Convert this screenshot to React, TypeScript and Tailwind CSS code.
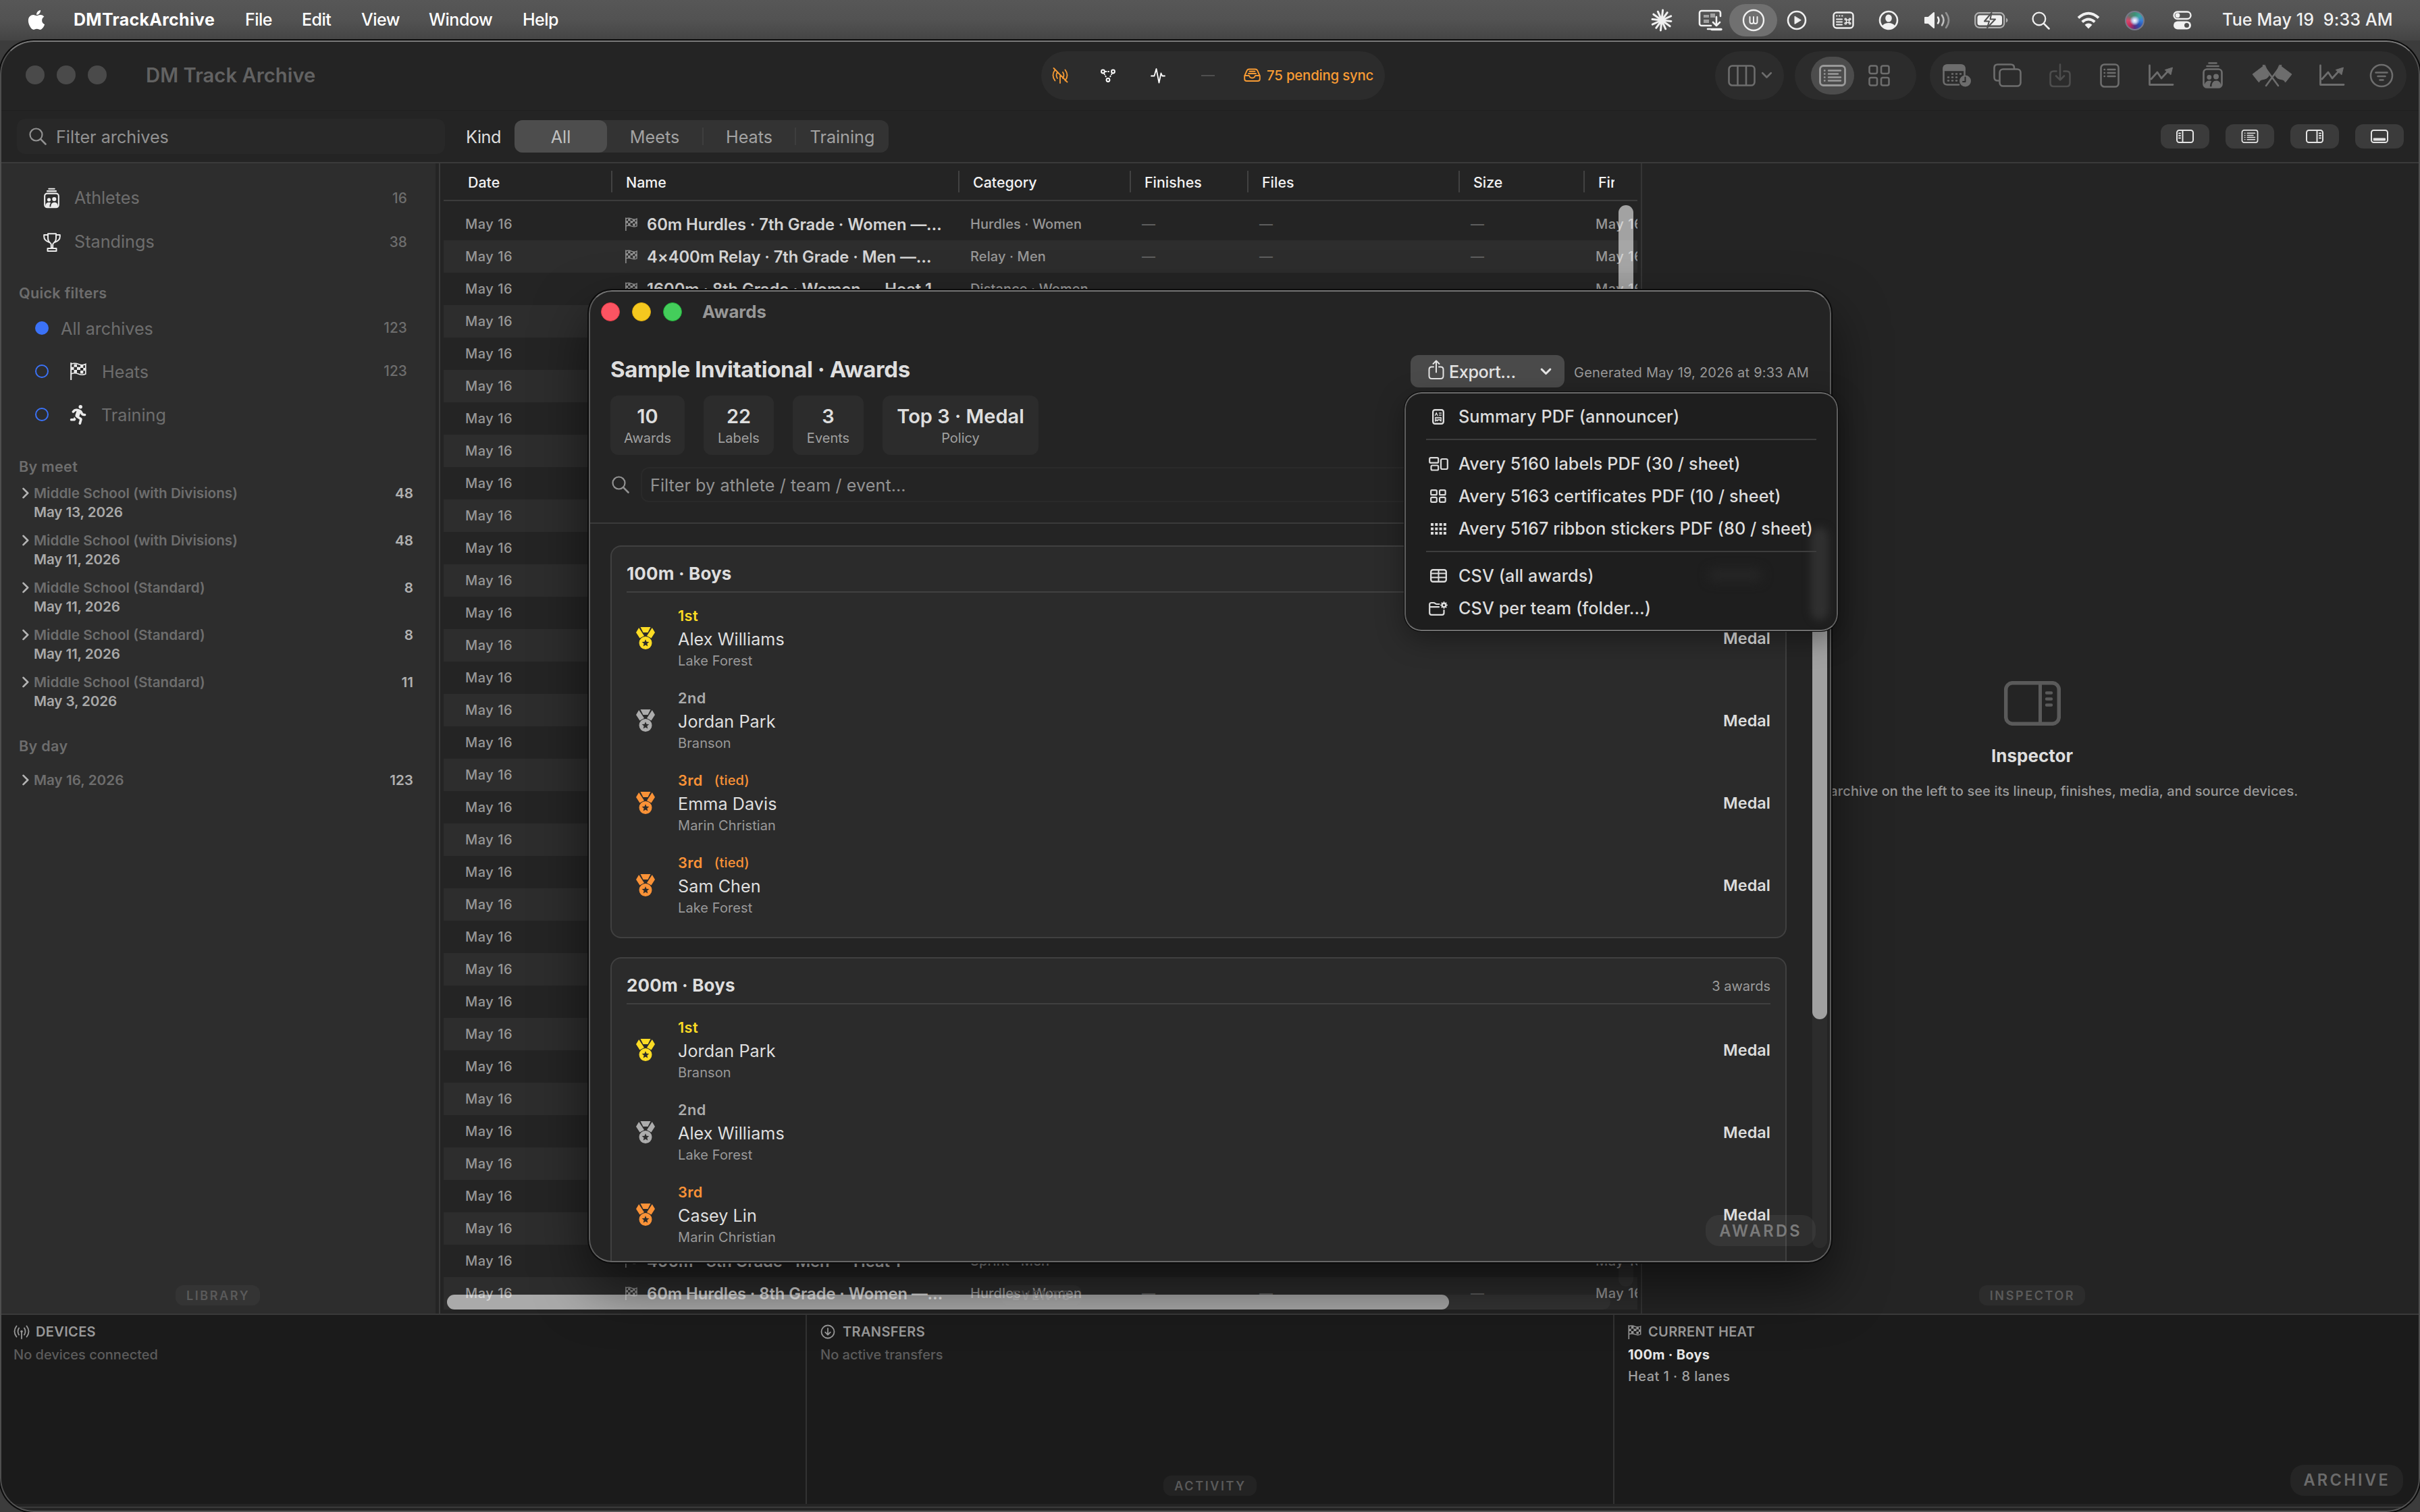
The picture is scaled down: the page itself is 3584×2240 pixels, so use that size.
import type { ReactNode } from "react";
import { FaApple, FaPersonRunning } from "react-icons/fa6";

/* ---------- icons ---------- */

type IconProps = { className?: string };

function Svg({ w, h, className = "", sw = 2, children }: { w: number; h: number; className?: string; sw?: number; children: ReactNode }) {
  return (
    <svg width={w} height={h} viewBox={`0 0 ${w} ${h}`} fill="none" stroke="currentColor" strokeWidth={sw} strokeLinecap="round" strokeLinejoin="round" className={`shrink-0 ${className}`}>
      {children}
    </svg>
  );
}

const Burst = () => (
  <Svg w={34} h={34} sw={3}>
    {[0, 30, 60, 90, 120, 150, 180, 210, 240, 270, 300, 330].map((a, i) => (
      <path key={a} d={i % 2 ? "M17 17V3" : "M17 17V2"} transform={`rotate(${a + 6} 17 17)`} />
    ))}
  </Svg>
);

const DisplayDown = () => (
  <Svg w={36} h={32} sw={2.6}>
    <path d="M19 24H5a3 3 0 0 1-3-3V5a3 3 0 0 1 3-3h25a3 3 0 0 1 3 3v5M14 29h5" />
    <path d="M8 8h8v4H8zM18 6h7v6h-7zM8 15h8v5H8z" fill="currentColor" stroke="none" opacity=".5" />
    <path d="M27 11v13m-5-5 5 5 5-5" />
    <path d="M20 29.5h14" strokeWidth="3.4" />
  </Svg>
);

const CircleW = () => (
  <Svg w={34} h={34} sw={2.4}>
    <circle cx="17" cy="17" r="15" />
    <path d="M11.500 12v7q0 3 2.800 3t2.700-3v-7m0 7q0 3 2.800 3t2.700-3v-7" strokeWidth="2" />
  </Svg>
);

const PlayCircle = () => (
  <Svg w={30} h={30} sw={2.6}>
    <circle cx="15" cy="15" r="13" />
    <path d="M12 9.5v11l9-5.500z" fill="currentColor" strokeWidth="1" />
  </Svg>
);

const CommandPanel = () => (
  <Svg w={32} h={26} sw={2.4}>
    <rect x="1.500" y="1.500" width="29" height="23" rx="4.500" />
    <path d="M6 6.500h.5M10 6.500h.5M14 6.500h.5M6 11.500h8M6 15.500h8M6 19.500h8" strokeWidth="2" />
    <path d="M20.500 12.500h4v4h-4zM20.500 12.500h-1.200a1.200 1.200 0 1 1 1.200-1.200zM24.500 12.500v-1.200a1.200 1.200 0 1 1 1.200 1.200zM20.500 16.500v1.200a1.200 1.200 0 1 1-1.200-1.200zM24.500 16.500h1.200a1.200 1.200 0 1 1-1.200 1.200z" strokeWidth="1.400" />
  </Svg>
);

const PersonCircle = () => (
  <Svg w={30} h={30} sw={2.6}>
    <circle cx="15" cy="15" r="13" />
    <ellipse cx="15" cy="12" rx="4.800" ry="5.600" fill="currentColor" stroke="none" />
    <path d="M5.500 23.500q3-4.500 9.500-4.500t9.500 4.500q-4 4.500-9.500 4.500t-9.500-4.500z" fill="currentColor" stroke="none" />
  </Svg>
);

const Speaker = () => (
  <Svg w={42} h={28} sw={2.6}>
    <path d="M2 10v8h5l8 7V3L7 10z" fill="currentColor" strokeWidth="2" />
    <path d="M21 9.500q3 4.500 0 9" />
    <path d="M27 6.500q5 7.500 0 15" opacity=".7" />
    <path d="M33 3q8 11 0 22" opacity=".4" />
  </Svg>
);

const Battery = () => (
  <Svg w={50} h={24} sw={2.2}>
    <rect x="1.200" y="1.200" width="43" height="21.600" rx="6" opacity=".6" />
    <rect x="4.500" y="4.500" width="36.500" height="15" rx="3.500" fill="currentColor" stroke="none" />
    <path d="M47 8.500q2.500 1 2.500 3.500T47 15.500z" fill="currentColor" stroke="none" opacity=".6" />
    <path d="M25.500 1 15 13.500h7L19 23l12-12.500h-7.500z" fill="currentColor" stroke="#505050" strokeWidth="2" />
  </Svg>
);

const Search = ({ className, size = 26 }: IconProps & { size?: number }) => (
  <svg width={size} height={size} viewBox="0 0 26 26" fill="none" stroke="currentColor" strokeWidth="2.200" strokeLinecap="round" className={`shrink-0 ${className ?? ""}`}>
    <circle cx="10.500" cy="10.500" r="9" />
    <path d="m17.200 17.200 7.300 7.300" strokeWidth="2.600" />
  </svg>
);

const Wifi = () => (
  <Svg w={36} h={26} sw={4}>
    <path d="M3 9.500q15-13.500 30 0M8.700 15.500q9.300-8 18.600 0" strokeLinecap="butt" />
    <path d="M18 25.500l5.500-5.800q-5.500-4.400-11 0z" fill="currentColor" stroke="none" />
  </Svg>
);

const Toggles = () => (
  <Svg w={28} h={28} sw={2.4}>
    <rect x="1.500" y="1.500" width="25" height="10.500" rx="5.200" />
    <circle cx="7" cy="6.700" r="3.400" fill="currentColor" stroke="none" />
    <rect x="1" y="15.500" width="26" height="12" rx="6" fill="currentColor" stroke="none" />
    <circle cx="20.500" cy="21.500" r="3.500" fill="#505050" stroke="none" />
  </Svg>
);

const AntennaSlash = () => (
  <Svg w={24} h={24} sw={1.800}>
    <path d="M4.500 3.500q-6 8 0 16M19.500 3.500q6 8 0 16M8 7q-3 4.500 0 9M16 7q3 4.500 0 9M12 12.500v10.500M2.500 1l20 20.500" />
  </Svg>
);

const Nodes = () => (
  <Svg w={22} h={20} sw={2}>
    <circle cx="3.500" cy="4" r="2.400" />
    <circle cx="18.500" cy="4" r="2.400" />
    <circle cx="11" cy="16.500" r="2.400" />
    <path d="M7.500 4h7M5.500 7.500l3.500 6M16.500 7.500l-3.500 6" strokeDasharray="1 2.600" strokeWidth="1.800" />
  </Svg>
);

const Pulse = () => (
  <Svg w={22} h={24} sw={1.800}>
    <path d="M1 12.500h4.500L8.500 2l4 20.500 3-14 1.800 4H21" />
  </Svg>
);

const Tray = () => (
  <Svg w={25} h={20} sw={1.900}>
    <path d="M1.200 11.500 4.500 4q1-2.500 3.500-2.500h9q2.500 0 3.500 2.500l3.300 7.500V16q0 3-3 3H4.200q-3 0-3-3zM1.200 11h6.300q.8 0 1 1 .8 2.500 4 2.500t4-2.500q.2-1 1-1h6.300M8.500 4.800h8M7 8h11" />
  </Svg>
);

const Columns = () => (
  <Svg w={42} h={32} sw={2.600}>
    <rect x="1.500" y="1.500" width="38" height="29" rx="5" />
    <path d="M14.500 2v28M27 2v28" />
  </Svg>
);

const ListRect = ({ w = 40, h = 32 }: { w?: number; h?: number }) => (
  <svg width={w} height={h} viewBox="0 0 40 32" fill="none" stroke="currentColor" strokeWidth="2.800" strokeLinecap="round">
    <rect x="1.500" y="1.500" width="37" height="29" rx="5" />
    <path d="M8 8.500h.5M8 13.500h.5M8 18.500h.5M8 23.500h.5M14 8.500h18M14 13.500h14M14 18.500h18M14 23.500h18" strokeWidth="2.400" />
  </svg>
);

const Grid4 = ({ w = 32, h = 32 }: { w?: number; h?: number }) => (
  <svg width={w} height={h} viewBox="0 0 32 32" preserveAspectRatio="none" fill="none" stroke="currentColor" strokeWidth="2.600">
    <rect x="1.500" y="1.500" width="11.500" height="11.500" rx="2.500" />
    <rect x="19" y="1.500" width="11.500" height="11.500" rx="2.500" />
    <rect x="1.500" y="19" width="11.500" height="11.500" rx="2.500" />
    <rect x="19" y="19" width="11.500" height="11.500" rx="2.500" />
  </svg>
);

const Grid4Small = () => (
  <Svg w={24} h={20} sw={2.200}>
    <rect x="1.200" y="1.200" width="8.600" height="7" rx="1.500" />
    <rect x="14" y="1.200" width="8.600" height="7" rx="1.500" />
    <rect x="1.200" y="11.800" width="8.600" height="7" rx="1.500" />
    <rect x="14" y="11.800" width="8.600" height="7" rx="1.500" />
  </Svg>
);

const CalendarClock = () => (
  <Svg w={43} h={34} sw={2.600}>
    <path d="M24 30.500H7q-5.500 0-5.500-5.500V7Q1.500 1.500 7 1.500h20q5.500 0 5.500 5.500v9" />
    <path d="M1.500 9V7Q1.500 1.500 7 1.500h20q5.500 0 5.500 5.500v2z" fill="currentColor" />
    <path d="M14 14.500h1M20 14.500h1M26 14.500h1M8 19.500h1M14 19.500h1M20 19.500h1M8 24.500h1M14 24.500h1M20 24.500h1" />
    <circle cx="33.500" cy="25" r="8.500" fill="currentColor" stroke="none" />
    <path d="M33.500 19.500V26H30" stroke="#2c2c2c" strokeWidth="2" />
  </Svg>
);

const CopyRects = () => (
  <Svg w={42} h={35} sw={2.600}>
    <path d="M8 25.500H6.500q-5 0-5-5v-14q0-5 5-5H26q5 0 5 5V8" />
    <rect x="9.500" y="8.500" width="31" height="25" rx="5" />
  </Svg>
);

const DownloadBox = () => (
  <Svg w={32} h={36} sw={2.600}>
    <path d="M10.500 11.500H6.500q-5 0-5 5V29q0 5 5 5h19q5 0 5-5V16.500q0-5-5-5h-4M16 1.500v23m-6-6 6 6 6-6" />
  </Svg>
);

const DocList = () => (
  <Svg w={29} h={36} sw={2.600}>
    <rect x="1.500" y="1.500" width="26" height="33" rx="5" />
    <path d="M6.500 9h.5M6.500 14h.5M6.500 19h.5M11.500 9h11M11.500 14h11M11.500 19h11" strokeWidth="2.400" />
  </Svg>
);

const ChartUp = () => (
  <Svg w={38} h={34} sw={2.800}>
    <path d="M1.500 2v28.500H36M4 22l9-10 6 9L31 8" />
    <path d="M24.500 8.500 35.500 5 33 15.500z" fill="currentColor" strokeWidth="1" />
  </Svg>
);

const PeopleStack = ({ w = 30, h = 39 }: { w?: number; h?: number }) => (
  <svg width={w} height={h} viewBox="0 0 30 39" fill="none" stroke="currentColor" strokeWidth="2.700" strokeLinecap="round">
    <path d="M9.500 1.500h11M6.500 6h17" />
    <rect x="1.500" y="10.500" width="27" height="27" rx="5" />
    <circle cx="9.800" cy="22.500" r="3.400" fill="currentColor" stroke="none" />
    <circle cx="20" cy="21.500" r="4" fill="currentColor" stroke="none" />
    <path d="M3 33q1.500-5.500 7-5.500 2 0 3.200 1-2.200 2.500-2.400 8.500H5q-2 0-2-2zM13.500 37q-.5-9.500 7-9.500 5 0 6.500 5.500v2q0 2-2 2z" fill="currentColor" stroke="none" />
  </svg>
);

const CrossedFlags = () => (
  <Svg w={60} h={34} sw={2.600}>
    <path d="M17 2 39 32M43 2 21 32" />
    <path d="M19 1.500 1 15l9.500 12q1-4 7-4.500 5-.5 8-5.500zM41 1.500 59 15l-9.500 12q-1-4-7-4.500-5-.5-8-5.500z" fill="currentColor" strokeWidth="1" />
  </Svg>
);

const FilterCircle = () => (
  <Svg w={36} h={36} sw={2.600}>
    <circle cx="18" cy="18" r="16" />
    <path d="M9.500 13.500h17M12.500 19h11M15.500 24.500h5" />
  </Svg>
);

const SidebarLeft = () => (
  <Svg w={26} h={20} sw={2}>
    <rect x="1" y="1" width="24" height="18" rx="3.500" />
    <path d="M9.500 1.500v17M4 5.500h2M4 9h2M4 12.500h2" />
  </Svg>
);

const SidebarRight = () => (
  <Svg w={26} h={20} sw={2}>
    <rect x="1" y="1" width="24" height="18" rx="3.500" />
    <path d="M16.500 1.500v17M20 5.500h2M20 9h2M20 12.500h2" />
  </Svg>
);

const BottomPanelIcon = () => (
  <Svg w={26} h={20} sw={2}>
    <rect x="1" y="1" width="24" height="18" rx="3.500" />
    <path d="M4.500 13h17v3h-17z" fill="currentColor" strokeWidth="1" />
  </Svg>
);

const InspectorBig = () => (
  <Svg w={84} h={66} sw={5.500}>
    <rect x="2.700" y="2.700" width="78.600" height="60.600" rx="10" />
    <path d="M53.500 4v58" strokeLinecap="butt" strokeWidth="5" />
    <path d="M63 17.500h7M63 26.500h7M63 35.500h7" strokeWidth="4.400" />
  </Svg>
);

const Trophy = () => (
  <Svg w={26} h={28} sw={2}>
    <path d="M7 1.200h12v6q0 5-3 7.300-1.800 1.300-1.800 3V22h-2.400v-4.500q0-1.700-1.800-3Q7 12.200 7 7.200z" />
    <path d="M7 3H1.200v2.500q0 6 8 8.500M19 3h5.800v2.500q0 6-8 8.500" />
    <path d="M6.500 23h13v4h-13z" />
  </Svg>
);

const CheckFlag = ({ w = 24, h = 26 }: { w?: number; h?: number }) => (
  <svg width={w} height={h} viewBox="0 0 24 26" fill="none" stroke="currentColor" strokeWidth="2" className="shrink-0">
    <path d="M1.200 1v24.500" strokeLinecap="round" />
    <path d="M1.200 2.500q5-2.500 11 0t10.600 0v14.500q-4.600 2.500-10.600 0t-11 0" strokeWidth="1.700" />
    <path d="M5.500 2.500h4.500v4.200H5.500zM15 4h4.300v4H15zM10 6.700h5v4.300h-5zM1.500 6.700h4v4.300h-4zM19.300 8H23v4.300h-3.700zM5.500 11H10v4.300H5.500zM15 12h4.300v4.500H15z" fill="currentColor" stroke="none" />
  </svg>
);

const Chevron = ({ className }: IconProps) => (
  <Svg w={10} h={17} sw={2.600} className={className}>
    <path d="m1.500 1.800 6.700 6.700-6.700 6.700" />
  </Svg>
);

const DownChevron = ({ w = 15, sw = 3 }: { w?: number; sw?: number }) => (
  <svg width={w} height={w * 0.62} viewBox="0 0 16 10" fill="none" stroke="currentColor" strokeWidth={sw} strokeLinecap="round" strokeLinejoin="round">
    <path d="m2 2 6 6 6-6" />
  </svg>
);

const MedalIcon = ({ className }: IconProps) => (
  <svg width="28" height="33" viewBox="0 0 28 33" fill="currentColor" className={`shrink-0 ${className ?? ""}`}>
    <path d="M6.500 0h15l-4 8h-7zM0 8l4.200-7L12 13l-6.500 3.500zM28 8l-4.200-7L16 13l6.500 3.500z" />
    <path fillRule="evenodd" d="M14 14a9.500 9.500 0 1 0 0 19 9.500 9.500 0 0 0 0-19zm0 4.200 1.500 3.600 3.900.3-3 2.500.9 3.800-3.300-2-3.300 2 .9-3.800-3-2.500 3.900-.3z" />
  </svg>
);

const Share = () => (
  <Svg w={24} h={30} sw={2}>
    <path d="M8 10.500H5.500q-4 0-4 4V24q0 4 4 4h13q4 0 4-4v-9.500q0-4-4-4H16M12 18.500V2M7.500 6 12 1.500 16.500 6" />
  </Svg>
);

const DocImage = () => (
  <Svg w={18} h={23} sw={2.400}>
    <rect x="1.200" y="1.200" width="15.600" height="20.600" rx="3" />
    <path d="M4.500 9.500 6.200 5.500l1.700 4M10.500 6h3M10.500 9h3" strokeWidth="1.400" />
    <path d="M4.800 12.500h8.400v5.500l-3-2.500-2.500 2-1-1-1.900 1.500z" strokeWidth="1.400" fill="currentColor" fillOpacity=".4" />
  </Svg>
);

const LabelsIcon = () => (
  <Svg w={29} h={21} sw={2.200}>
    <rect x="1.200" y="1.200" width="13" height="7.500" rx="1.800" />
    <rect x="3.500" y="12.500" width="10.700" height="7" rx="1.800" />
    <rect x="18" y="3" width="9.800" height="15" rx="2" />
  </Svg>
);

const Dots = () => (
  <Svg w={23} h={17}>
    <path d="M0 0h4v4H0zM6.300 0h4v4h-4zM12.600 0h4v4h-4zM18.900 0h4v4h-4zM0 6.500h4v4H0zM6.300 6.500h4v4h-4zM12.600 6.500h4v4h-4zM18.900 6.500h4v4h-4zM0 13h4v4H0zM6.300 13h4v4h-4zM12.600 13h4v4h-4zM18.900 13h4v4h-4z" fill="currentColor" stroke="none" />
  </Svg>
);

const TableIcon = () => (
  <Svg w={25} h={20} sw={2.400}>
    <rect x="1.200" y="1.200" width="22.600" height="17.600" rx="3" />
    <path d="M1.500 6.500h22M1.500 12.500h22M12.500 2v16.500" strokeWidth="2" />
  </Svg>
);

const FolderGear = () => (
  <Svg w={28} h={21} sw={2.200}>
    <path d="M22.500 13v4q0 2.800-2.800 2.800H4q-2.800 0-2.800-2.800V4.500Q1.200 2 4 2h3q1.500 0 2.500 1t2.500 1h3.500M1.500 8.200H15" />
    <circle cx="22.500" cy="5.500" r="2.800" strokeWidth="2.400" />
    <path d="M22.500 1v9M18 5.500h9M19.300 2.300l6.400 6.400M25.700 2.300l-6.400 6.400" strokeWidth="1.800" strokeDasharray="1.300 6.400" />
  </Svg>
);

const AntennaWaves = () => (
  <Svg w={24} h={22} sw={1.800}>
    <path d="M4.500 2.500q-6 8 0 16M19.500 2.500q6 8 0 16M8 5.500q-3 5 0 10M16 5.500q3 5 0 10M12 12v9" />
    <circle cx="12" cy="10.500" r="1.800" fill="currentColor" stroke="none" />
  </Svg>
);

const DownCircle = () => (
  <Svg w={22} h={22} sw={1.800}>
    <circle cx="11" cy="11" r="9.500" />
    <path d="M11 6v9.500m-3.800-3.800 3.800 3.800 3.800-3.800" />
  </Svg>
);

/* ---------- shared ---------- */

function Pill({ children, className = "" }: { children: ReactNode; className?: string }) {
  return (
    <div className={`flex h-[30px] items-center rounded-[12px] bg-white/[0.035] pt-px pr-[15px] pl-[16px] text-[18px] font-semibold tracking-[2.600px] text-[#5a5a5a] ${className}`}>
      {children}
    </div>
  );
}

/* ---------- menu bar ---------- */

function MenuBar() {
  return (
    <header className="flex h-[60px] shrink-0 items-center bg-linear-to-b from-[#575757] via-[#525252] to-[#444444] pr-[36px] pl-[39px] text-[25px] font-medium tracking-[-0.500px] text-white">
      <FaApple className="mb-[2px] h-[33px] w-[30px]" />
      <span className="ml-[40px] w-[254px] font-bold tracking-[0.300px]">DMTrackArchive</span>
      <span className="w-[84px]">File</span>
      <span className="w-[88px]">Edit</span>
      <span className="w-[100px]">View</span>
      <span className="w-[139px]">Window</span>
      <span>Help</span>
      <div className="ml-auto flex items-center text-[#f0f0f0]">
        <Burst />
        <div className="ml-[37px]"><DisplayDown /></div>
        <div className="ml-[10px] flex h-[48px] w-[71px] items-center justify-center rounded-full bg-[#707070]"><CircleW /></div>
        <div className="ml-[14px]"><PlayCircle /></div>
        <div className="ml-[38px]"><CommandPanel /></div>
        <div className="ml-[36px]"><PersonCircle /></div>
        <div className="ml-[37px]"><Speaker /></div>
        <div className="ml-[33px]"><Battery /></div>
        <div className="ml-[35px]"><Search size={27} /></div>
        <div className="ml-[39px]"><Wifi /></div>
        <div className="ml-[36px] size-[29px] rounded-full border-2 border-[#77798a] bg-[radial-gradient(circle_at_50%_50%,#ffffff_0%,#b9c8ea_20%,transparent_42%),conic-gradient(from_0deg,#3f8f74,#3fa6a0,#3a7fd8,#2a4fb0,#5a2f80,#c22a5a,#d8476a,#5c7a6c,#3f8f74)]" />
        <div className="ml-[42px]"><Toggles /></div>
        <span className="ml-[45px] w-[257px] whitespace-pre tracking-[0.150px]">Tue May 19  9:33 AM</span>
      </div>
    </header>
  );
}

/* ---------- title bar and filter row ---------- */

function TitleBar() {
  return (
    <div className="flex h-[104px] shrink-0 items-center border-b border-[#202020] text-[#6d6d6d]">
      <div className="flex w-[1542px] items-center pl-[38px]">
        <div className="flex gap-[18px]">
          <span className="size-[28px] rounded-full bg-[#4a4a4a]" />
          <span className="size-[28px] rounded-full bg-[#4a4a4a]" />
          <span className="size-[28px] rounded-full bg-[#4a4a4a]" />
        </div>
        <span className="ml-[58px] pt-px text-[29.200px] font-semibold tracking-[0.050px] text-[#626262]">DM Track Archive</span>
      </div>
      <div className="flex h-[72px] w-[509px] items-center rounded-full bg-[#2c2c2c] pl-[16px] text-white">
        <span className="text-[#f79b34]"><AntennaSlash /></span>
        <span className="ml-[48px]"><Nodes /></span>
        <span className="ml-[52px]"><Pulse /></span>
        <span className="ml-[53px] h-[2px] w-[20px] bg-[#4f4f4f]" />
        <span className="ml-[43px] flex items-center gap-[9px] text-[#f79b34]">
          <Tray />
          <span className="pt-px text-[20.400px] font-medium tracking-[-0.200px]">75 pending sync</span>
        </span>
      </div>
      <div className="mr-[20px] ml-auto flex items-center">
        <div className="flex h-[72px] w-[102px] items-center gap-[7px] rounded-full bg-[#2c2c2c] pl-[19px]">
          <Columns />
          <DownChevron w={17} sw={2.600} />
        </div>
        <div className="ml-[16px] flex h-[72px] w-[180px] items-center rounded-full bg-[#2c2c2c] pl-[24px]">
          <span className="flex h-[56px] w-[64px] items-center justify-center rounded-full bg-[#4c4c4c] text-[#9a9a9a]"><ListRect /></span>
          <span className="ml-[21px]"><Grid4 /></span>
        </div>
        <div className="ml-[20px] flex h-[72px] w-[706px] items-center rounded-full bg-[#2c2c2c] pl-[19px]">
          <CalendarClock />
          <span className="ml-[32px]"><CopyRects /></span>
          <span className="ml-[41px] text-[#4d4d4d]"><DownloadBox /></span>
          <span className="ml-[43px]"><DocList /></span>
          <span className="ml-[43px]"><ChartUp /></span>
          <span className="ml-[42px]"><PeopleStack /></span>
          <span className="ml-[43px]"><CrossedFlags /></span>
          <span className="ml-[40px]"><ChartUp /></span>
          <span className="ml-[36px]"><FilterCircle /></span>
        </div>
      </div>
    </div>
  );
}

const layoutIcons = [<SidebarLeft />, <ListRect w={26} h={20} />, <SidebarRight />, <BottomPanelIcon />];

function FilterRow() {
  return (
    <div className="flex h-[76px] shrink-0 items-center pr-[24px] pl-[25px] text-[25.200px]">
      <div className="flex h-[52px] w-[634px] items-center rounded-[12px] bg-[#282828] pl-[18px] text-[#919191]">
        <Search />
        <span className="ml-[14px] pt-[3px]">Filter archives</span>
      </div>
      <span className="ml-[31px] w-[72px] pt-[3px] tracking-[-0.400px] text-[#dedede]">Kind</span>
      <div className="flex h-[48px] w-[554px] items-center rounded-[12px] bg-[#333333] text-[#a2a2a2]">
        <span className="flex h-[48px] w-[137px] items-center justify-center rounded-[12px] bg-[#4d4d4d] pt-[3px] text-[#c0c0c0]">All</span>
        <span className="w-[141px] pt-[3px] text-center">Meets</span>
        <span className="h-[26px] w-[2px] bg-[#3e3e3e]" />
        <span className="w-[135px] pt-[3px] text-center">Heats</span>
        <span className="h-[26px] w-[2px] bg-[#3e3e3e]" />
        <span className="flex-1 pt-[3px] text-center">Training</span>
      </div>
      <div className="ml-auto flex gap-[24px] text-[#e4e4e4]">
        {layoutIcons.map((icon, i) => (
          <span key={i} className="flex h-[36px] w-[72px] items-center justify-center rounded-[12px] bg-[#3b3b3b]">{icon}</span>
        ))}
      </div>
    </div>
  );
}

/* ---------- sidebar ---------- */

const meets = [
  ["Middle School (with Divisions)", "May 13, 2026", "48"],
  ["Middle School (with Divisions)", "May 11, 2026", "48"],
  ["Middle School (Standard)", "May 11, 2026", "8"],
  ["Middle School (Standard)", "May 11, 2026", "8"],
  ["Middle School (Standard)", "May 3, 2026", "11"],
];

function Count({ children }: { children: ReactNode }) {
  return <span className="ml-auto text-[20.800px] font-medium tracking-[0.100px]">{children}</span>;
}

function Sidebar() {
  return (
    <aside className="relative flex w-[645px] shrink-0 flex-col bg-[#2d2d2d] text-[25.200px] text-[#6d6d6d]">
      <div className="mt-[19px] flex h-[65px] items-center pr-[42px] pl-[65px]">
        <span className="flex w-[45px] text-[#ebebeb]"><PeopleStack w={23} h={31} /></span>
        <span className="pt-px">Athletes</span>
        <Count>16</Count>
      </div>
      <div className="flex h-[65px] items-center pr-[42px] pl-[64px]">
        <span className="flex w-[46px] text-[#ebebeb]"><Trophy /></span>
        <span className="pt-px">Standings</span>
        <Count>38</Count>
      </div>
      <div className="mt-[23px] flex h-[40px] items-center pl-[28px] text-[21.600px] font-semibold tracking-[0.300px]">Quick filters</div>
      <div className="flex h-[64px] items-center pr-[42px] pl-[52px]">
        <span className="mr-[18px] size-[20px] rounded-full bg-[#3b72f7]" />
        <span className="pt-[3px]">All archives</span>
        <Count>123</Count>
      </div>
      <div className="flex h-[64px] items-center pr-[42px] pl-[52px]">
        <span className="mr-[32px] size-[20px] rounded-full border-2 border-[#3b72f7]" />
        <span className="flex w-[47px] text-[#ebebeb]"><CheckFlag /></span>
        <span className="pt-[3px]">Heats</span>
        <Count>123</Count>
      </div>
      <div className="flex h-[64px] items-center pr-[42px] pl-[52px]">
        <span className="mr-[30px] size-[20px] rounded-full border-2 border-[#3b72f7]" />
        <span className="flex w-[48px] text-[#ebebeb]"><FaPersonRunning className="size-[29px]" /></span>
        <span className="pt-[3px]">Training</span>
      </div>
      <div className="mt-[25px] flex h-[40px] items-center pl-[28px] text-[21.600px] font-semibold tracking-[0.300px]">By meet</div>
      <div className="mt-[6px] text-[20.700px] leading-[28px] font-semibold">
        {meets.map(([name, date, count], i) => (
          <div key={i} className="flex h-[70px] pr-[33px] pl-[33px]">
            <Chevron className="mt-[5px] mr-[7px] text-[#b4b4b4]" />
            <div>
              <div>{name}</div>
              <div className="tracking-[-0.150px] text-[#a9a9a9]">{date}</div>
            </div>
            <span className="ml-auto text-[#b0b0b0]">{count}</span>
          </div>
        ))}
      </div>
      <div className="mt-[18px] flex h-[40px] items-center pl-[28px] text-[21.600px] font-semibold tracking-[0.300px]">By day</div>
      <div className="mt-[17px] flex h-[28px] pr-[33px] pl-[33px] text-[20.700px] leading-[28px] font-semibold">
        <Chevron className="mt-[5px] mr-[7px] text-[#b4b4b4]" />
        May 16, 2026
        <span className="ml-auto text-[#b0b0b0]">123</span>
      </div>
      <div className="absolute inset-x-0 bottom-[12px] flex justify-center"><Pill>LIBRARY</Pill></div>
    </aside>
  );
}

/* ---------- archive table ---------- */

const headers = ["Date", "Name", "Category", "Finishes", "Files", "Size", "Fir"];
const events = [
  ["60m Hurdles · 7th Grade · Women —…", "Hurdles · Women"],
  ["4×400m Relay · 7th Grade · Men —…", "Relay · Men"],
  ["1600m · 8th Grade · Women — Heat 1", "Distance · Women"],
  ["400m · 8th Grade · Men — Heat 1", "Sprint · Men"],
];
const tableRows = Array.from({ length: 34 }, (_, i) => {
  if (i < 3) return events[i];
  if (i === 33) return ["60m Hurdles · 8th Grade · Women —…", "Hurdles · Women"];
  return events[3];
});

function ArchiveTable() {
  return (
    <section className="relative w-[1768px] shrink-0 overflow-hidden">
      <div className="w-[1734px] overflow-hidden">
        <div className="grid h-[54px] w-[1768px] grid-cols-[250px_514px_254px_174px_313px_185px_78px] items-center text-[21.400px] font-medium text-[#f2f2f2]">
          {headers.map((h, i) => (
            <div key={h} className={`flex h-[32px] items-center border-[#424242] pt-[2px] ${i === 0 ? "pl-[36px]" : "pl-[20px]"} ${i < 6 ? "border-r-2" : ""}`}>{h}</div>
          ))}
        </div>
      </div>
      <div className="mb-[10px] h-[2px] bg-[#3c3c3c]" />
      {tableRows.map(([name, cat], i) => (
        <div key={i} className={`grid h-[48px] grid-cols-[250px_514px_254px_174px_313px_185px_140px] items-center text-[20px] font-medium whitespace-nowrap text-[#979797] ${i % 2 ? "bg-[#2d2d2d]" : ""}`}>
          <div className="pl-[32px] tracking-[0.500px]">May 16</div>
          <div className="flex items-center pl-[19px]">
            <CheckFlag w={18} h={20} />
            <span className="ml-[14px] pt-px text-[23.800px] font-semibold tracking-[-0.080px] text-[#d4d4d4]">{name}</span>
          </div>
          <div className="pl-[16px] tracking-[0.100px]">{cat}</div>
          <div className="pl-[16px] text-[#5e5e5e]">—</div>
          <div className="pl-[16px] text-[#5e5e5e]">—</div>
          <div className="pl-[16px] text-[#5e5e5e]">—</div>
          <div className="pl-[16px] tracking-[0.500px]">May 16</div>
        </div>
      ))}
      <div className="absolute bottom-[12px] left-[826px]"><Pill>EVENTS</Pill></div>
      <div className="absolute top-[62px] right-[6px] h-[1602px] w-[22px] rounded-full bg-white/[0.04]">
        <div className="h-[900px] rounded-full bg-white/[0.56]" />
      </div>
      <div className="absolute bottom-[6px] left-[5px] h-[22px] w-[1723px] rounded-full bg-white/[0.04]">
        <div className="h-full w-[1484px] rounded-full bg-white/[0.58]" />
      </div>
    </section>
  );
}

/* ---------- inspector and activity ---------- */

function Inspector() {
  return (
    <section className="relative flex flex-1 flex-col items-center overflow-hidden pl-[3px]">
      <div className="mt-[767px] text-[#5a5a5a]"><InspectorBig /></div>
      <div className="mt-[28px] h-[34px] text-[26px] leading-[34px] font-bold text-[#dedede]">Inspector</div>
      <div className="mt-[19px] text-[20px] leading-[32px] font-medium tracking-[0.100px] whitespace-nowrap text-[#9a9a9a]">
        Select an archive on the left to see its lineup, finishes, media, and source devices.
      </div>
      <div className="absolute inset-x-0 bottom-[12px] flex justify-center pl-[3px]"><Pill>INSPECTOR</Pill></div>
    </section>
  );
}

function Heading({ icon, children }: { icon: ReactNode; children: ReactNode }) {
  return (
    <div className="flex h-[34px] items-center gap-[8px] pt-[2px] font-semibold tracking-[0.350px] text-[#999999]">
      <span className="flex w-[25px] items-center">{icon}</span>
      {children}
    </div>
  );
}

function BottomPanel() {
  return (
    <div className="relative flex h-[280px] shrink-0 bg-[#1b1b1b] text-[20px] font-medium">
      <div className="w-[1195px] border-r-2 border-[#333333] pt-[7px] pl-[20px]">
        <Heading icon={<AntennaWaves />}>DEVICES</Heading>
        <div className="leading-[36px] text-[#5c5c5c]">No devices connected</div>
      </div>
      <div className="w-[1196px] border-r-2 border-[#333333] pt-[7px] pl-[20px]">
        <Heading icon={<DownCircle />}>TRANSFERS</Heading>
        <div className="leading-[36px] text-[#5c5c5c]">No active transfers</div>
      </div>
      <div className="flex-1 pt-[7px] pl-[20px]">
        <div className="flex h-[34px] items-center gap-[10px] pt-[2px] font-semibold tracking-[0.350px] text-[#999999]">
          <CheckFlag w={20} h={21} />
          CURRENT HEAT
        </div>
        <div className="leading-[36px] font-bold tracking-[0.250px] text-[#e6e6e6]">100m · Boys</div>
        <div className="leading-[28px] tracking-[0.450px] text-[#a0a0a0]">Heat 1 · 8 lanes</div>
      </div>
      <div className="absolute inset-x-0 bottom-[12px] flex justify-center"><Pill>ACTIVITY</Pill></div>
      <div className="absolute right-[25px] bottom-[12px] flex h-[46px] items-center rounded-[20px] bg-[#252525] px-[19px] text-[23.600px] font-semibold tracking-[3.300px] text-[#6b6b6b]">
        ARCHIVE
      </div>
    </div>
  );
}

/* ---------- awards window ---------- */

const stats = [
  { value: "10", label: "Awards", box: "w-[110px]" },
  { value: "22", label: "Labels", box: "w-[104px] ml-[28px]" },
  { value: "3", label: "Events", box: "w-[105px] ml-[28px]" },
  { value: "Top 3 · Medal", label: "Policy", box: "w-[231px] ml-[28px]" },
];

type Award = { place: string; tied?: boolean; name: string; school: string; color: string };

const gold = "text-[#fcdc24]";
const silver = "text-[#acacac]";
const bronze = "text-[#fa9237]";

const cards: { title: string; count: string; awards: Award[] }[] = [
  {
    title: "100m · Boys",
    count: "4 awards",
    awards: [
      { place: "1st", name: "Alex Williams", school: "Lake Forest", color: gold },
      { place: "2nd", name: "Jordan Park", school: "Branson", color: silver },
      { place: "3rd", tied: true, name: "Emma Davis", school: "Marin Christian", color: bronze },
      { place: "3rd", tied: true, name: "Sam Chen", school: "Lake Forest", color: bronze },
    ],
  },
  {
    title: "200m · Boys",
    count: "3 awards",
    awards: [
      { place: "1st", name: "Jordan Park", school: "Branson", color: gold },
      { place: "2nd", name: "Alex Williams", school: "Lake Forest", color: silver },
      { place: "3rd", name: "Casey Lin", school: "Marin Christian", color: bronze },
    ],
  },
];

function AwardRow({ a }: { a: Award }) {
  return (
    <div className="flex h-[122px] items-center pl-[14px]">
      <MedalIcon className={`mt-[3px] ${a.color}`} />
      <div className="ml-[34px]">
        <div className={`flex h-[36px] items-center text-[21.800px] font-semibold tracking-[0.400px] ${a.color}`}>
          {a.place}
          {a.tied && <span className="ml-[17px] text-[20px] font-medium tracking-[0.200px]">(tied)</span>}
        </div>
        <div className="h-[34px] text-[25.200px] leading-[34px] tracking-[0.050px] text-[#dfdfdf]">{a.name}</div>
        <div className="h-[30px] text-[20px] leading-[30px] tracking-[0.100px] text-[#999999]">{a.school}</div>
      </div>
      <span className="mt-[4px] ml-auto text-[23.500px] font-semibold text-[#dcdcdc]">Medal</span>
    </div>
  );
}

function AwardsWindow() {
  return (
    <div className="absolute top-[430px] left-[872px] flex h-[1440px] w-[1840px] flex-col overflow-hidden rounded-[34px] bg-[#242424]">
      <div className="flex h-[64px] shrink-0 items-center pl-[18px]">
        <span className="size-[28px] rounded-full border border-[#e03945] bg-[#fc5462]" />
        <span className="ml-[18px] size-[28px] rounded-full border border-[#dba90f] bg-[#f5c81f]" />
        <span className="ml-[18px] size-[28px] rounded-full border border-[#1fac38] bg-[#44cd5b]" />
        <span className="ml-[30px] pt-px text-[25.800px] font-bold text-[#979797]">Awards</span>
      </div>
      <div className="mt-[26px] flex h-[60px] shrink-0 items-center px-[32px]">
        <span className="pb-[5px] text-[33px] font-bold tracking-[-0.420px] text-[#dedede]">Sample Invitational · Awards</span>
        <div className="ml-auto flex h-[48px] w-[228px] items-center rounded-[12px] bg-[#4a4a4a] pl-[26px] text-[#e4e4e4]">
          <span className="-mt-[4px]"><Share /></span>
          <span className="ml-[7px] pt-[3px] text-[25.200px] font-medium tracking-[-0.400px]">Export…</span>
          <span className="mr-[19px] ml-auto"><DownChevron w={17} sw={2.800} /></span>
        </div>
        <span className="ml-[14px] w-[349px] pt-[3px] text-right text-[20px] tracking-[0.220px] whitespace-nowrap text-[#999999]">
          <span className="-mr-[1px] pr-[2px]">Generated May 19, 2026 at 9:33 AM</span>
        </span>
      </div>
      <div className="mt-[6px] flex h-[88px] shrink-0 px-[32px]">
        {stats.map((s) => (
          <div key={s.label} className={`flex h-[88px] flex-col items-center rounded-[12px] bg-[#2c2c2c] pt-[14px] ${s.box}`}>
            <span className="h-[34px] text-[29px] leading-[34px] font-semibold whitespace-nowrap text-[#dedede]">{s.value}</span>
            <span className="h-[30px] text-[20px] leading-[30px] text-[#a0a0a0]">{s.label}</span>
          </div>
        ))}
      </div>
      <div className="mt-[18px] flex h-[52px] shrink-0 items-center px-[32px] text-[25.200px] tracking-[0.060px] text-[#929292]">
        <Search className="ml-[2px]" />
        <div className="ml-[17px] flex h-[52px] flex-1 items-center rounded-[12px] border-2 border-[#2a2a2a] pt-[3px] pl-[12px]">Filter by athlete / team / event…</div>
      </div>
      <div className="mt-[30px] h-[2px] shrink-0 bg-[#3a3a3a]" />
      <div className="flex min-h-0 flex-1 flex-col gap-[28px] pt-[32px] pl-[32px]">
        {cards.map((c, i) => (
          <div key={c.title} className={`w-[1742px] shrink-0 rounded-[16px] border-2 border-[#404040] bg-[#2b2b2b] px-[22px] pb-[17px] ${i === 1 ? "h-[520px]" : ""}`}>
            <div className="flex h-[68px] items-center justify-between border-b-2 border-[#404040] pt-[12px]">
              <span className="text-[26px] font-bold tracking-[0.150px] text-[#dedede]">{c.title}</span>
              <span className="pt-[3px] text-[20px] text-[#9b9b9b]">{c.count}</span>
            </div>
            <div className="pt-[5px]">
              {c.awards.map((a, j) => (
                <AwardRow key={j} a={a} />
              ))}
            </div>
          </div>
        ))}
      </div>
      <div className="absolute top-[346px] left-[1812px] h-[1073px] w-[22px] rounded-full bg-[#2c2c2c]">
        <div className="h-[734px] rounded-full bg-[#a1a1a1]" />
      </div>
      <div className="absolute right-[23px] bottom-[24px] flex h-[46px] items-center rounded-[20px] bg-white/[0.05] pt-px pr-[20px] pl-[20px] text-[23.600px] font-semibold tracking-[3.300px] text-[#7a7a7a]">
        AWARDS
      </div>
      <div className="absolute inset-0 rounded-[34px] border-2 border-x-[#5a5a5a] border-t-[#747474] border-b-[#666666]" />
    </div>
  );
}

/* ---------- export menu ---------- */

function MenuItem({ icon, children }: { icon: ReactNode; children: ReactNode }) {
  return (
    <div className="flex h-[48px] items-center pl-[30px]">
      <span className="mr-[10px] flex w-[40px] justify-center">{icon}</span>
      <span className="pt-[2px]">{children}</span>
    </div>
  );
}

function ExportMenu() {
  return (
    <div className="absolute top-[581px] left-[2080px] h-[354px] w-[642px] overflow-hidden rounded-[25px] bg-[#1e1e1e] pt-[12px] text-[25.200px] font-medium tracking-[0.080px] whitespace-nowrap text-[#dcdcdc] shadow-[0_0_0_1px_#0a0a0a,0_12px_40px_rgba(0,0,0,0.350)]">
      <div className="absolute top-[200px] left-[602px] h-[138px] w-[26px] rounded-full bg-[#303030] blur-[6px]" />
      <div className="absolute top-[262px] left-[450px] h-[18px] w-[80px] rounded-full bg-[#262626] blur-[8px]" />
      <div className="relative">
        <MenuItem icon={<DocImage />}>Summary PDF (announcer)</MenuItem>
        <div className="mt-[9px] mb-[11px] ml-[32px] h-[2px] w-[578px] bg-[#3d3d3d]" />
        <MenuItem icon={<LabelsIcon />}>Avery 5160 labels PDF (30 / sheet)</MenuItem>
        <MenuItem icon={<Grid4Small />}>Avery 5163 certificates PDF (10 / sheet)</MenuItem>
        <MenuItem icon={<Dots />}>Avery 5167 ribbon stickers PDF (80 / sheet)</MenuItem>
        <div className="mt-[9px] mb-[11px] ml-[32px] h-[2px] w-[578px] bg-[#3d3d3d]" />
        <MenuItem icon={<TableIcon />}>CSV (all awards)</MenuItem>
        <MenuItem icon={<FolderGear />}>CSV per team (folder…)</MenuItem>
      </div>
      <div className="absolute inset-0 rounded-[25px] border-2 border-x-[#5f5f5f] border-t-[#6a6a6a] border-b-[#707070]" />
    </div>
  );
}

/* ---------- page ---------- */

export default function App() {
  return (
    <div className="relative flex h-[2240px] w-[3584px] flex-col overflow-hidden bg-[#3c3c3c] font-['Inter',sans-serif]">
      <MenuBar />
      <main className="relative flex h-[2180px] flex-col overflow-hidden rounded-[50px] bg-[#242424] shadow-[0_0_0_2px_#0c0c0c]">
        <TitleBar />
        <FilterRow />
        <div className="h-[2px] shrink-0 bg-[#3a3a3a]" />
        <div className="flex h-[1704px] shrink-0 overflow-hidden">
          <Sidebar />
          <div className="ml-[5px] h-full w-[2px] shrink-0 bg-[#3a3a3a]" />
          <div className="w-[5px] shrink-0" />
          <ArchiveTable />
          <div className="ml-[5px] h-full w-[2px] shrink-0 bg-[#353535]" />
          <Inspector />
        </div>
        <div className="h-[2px] shrink-0 bg-[#3a3a3a]" />
        <BottomPanel />
        <div className="mt-[4px] h-[2px] shrink-0 bg-[#3a3a3a]" />
        <div className="absolute inset-0 rounded-[50px] border-2 border-x-[#4e4e4e] border-t-[#7a7a7a] border-b-[#555555]" />
      </main>
      <div className="absolute top-[430px] left-[872px] h-[1440px] w-[1840px] rounded-[34px] shadow-[0_0_0_2px_#0c0c0c,0_36px_80px_rgba(0,0,0,0.550)]" />
      <AwardsWindow />
      <ExportMenu />
    </div>
  );
}
